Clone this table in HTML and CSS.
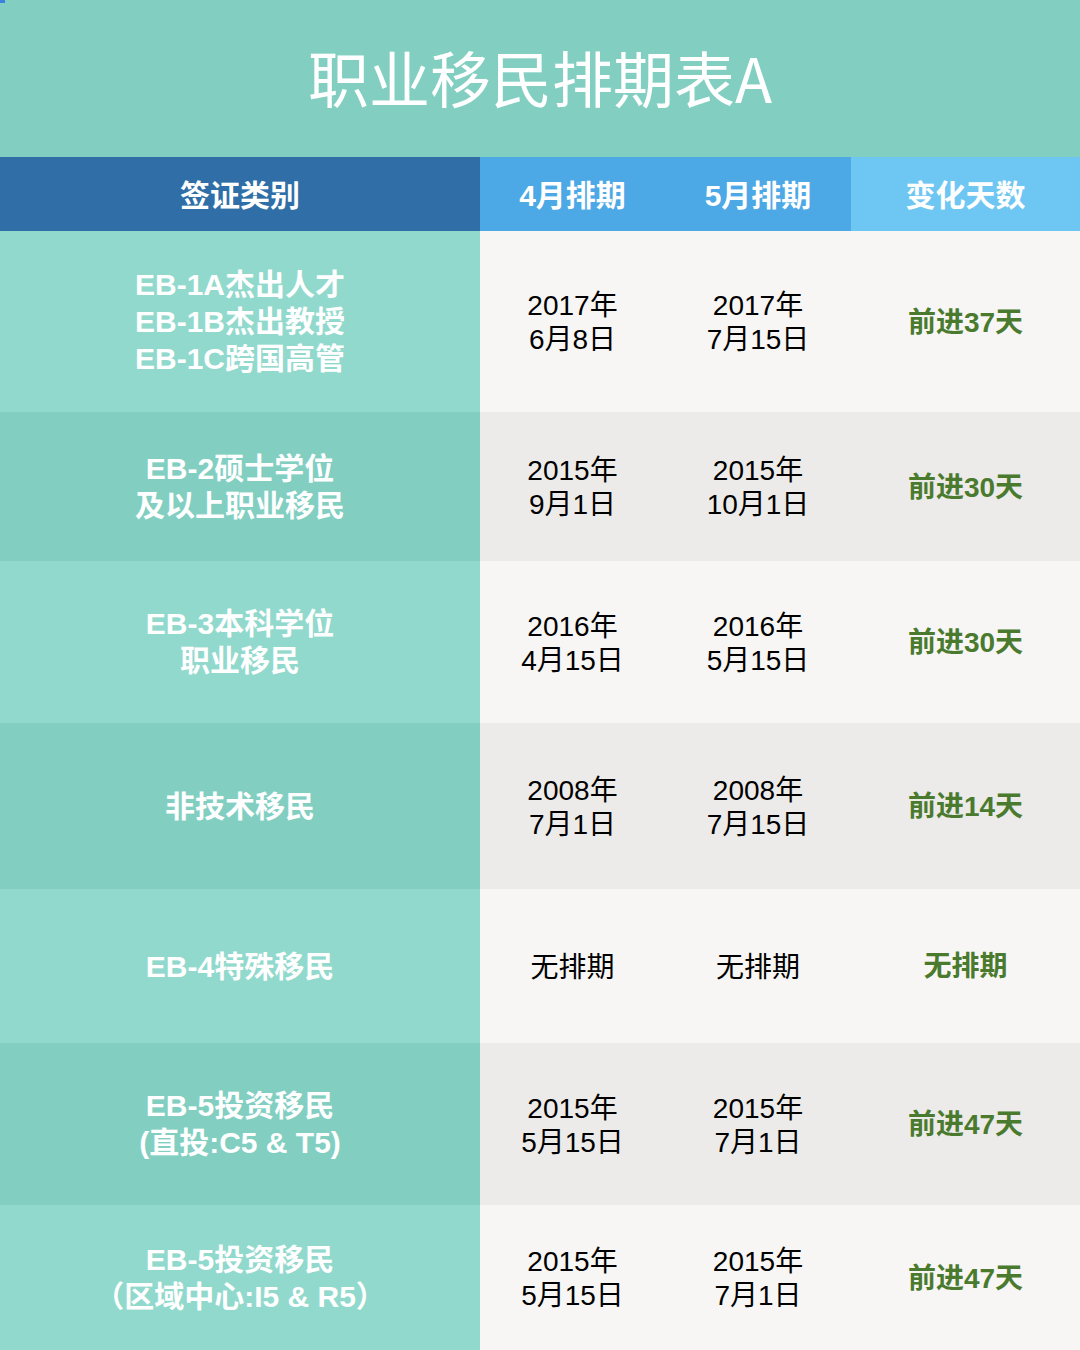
FILE: index.html
```html
<!DOCTYPE html>
<html lang="zh">
<head>
<meta charset="utf-8">
<link rel="stylesheet" href="styles.css">
</head>
<body>
<div class="page">
  <span class="corner"></span>
  <header class="title">职业移民排期表A</header>
  <div class="table">
    <div class="th th-cat">签证类别</div>
    <div class="th th-mid">4月排期</div>
    <div class="th th-mid">5月排期</div>
    <div class="th th-light">变化天数</div>

    <div class="c cat l r1">EB-1A杰出人才<br>EB-1B杰出教授<br>EB-1C跨国高管</div>
    <div class="c d l">2017年<br>6月8日</div>
    <div class="c d l">2017年<br>7月15日</div>
    <div class="c g l">前进37天</div>

    <div class="c cat k">EB-2硕士学位<br>及以上职业移民</div>
    <div class="c d k">2015年<br>9月1日</div>
    <div class="c d k">2015年<br>10月1日</div>
    <div class="c g k">前进30天</div>

    <div class="c cat l">EB-3本科学位<br>职业移民</div>
    <div class="c d l">2016年<br>4月15日</div>
    <div class="c d l">2016年<br>5月15日</div>
    <div class="c g l">前进30天</div>

    <div class="c cat k">非技术移民</div>
    <div class="c d k">2008年<br>7月1日</div>
    <div class="c d k">2008年<br>7月15日</div>
    <div class="c g k">前进14天</div>

    <div class="c cat l">EB-4特殊移民</div>
    <div class="c d l">无排期</div>
    <div class="c d l">无排期</div>
    <div class="c g l">无排期</div>

    <div class="c cat k">EB-5投资移民<br>(直投:C5 &amp; T5)</div>
    <div class="c d k">2015年<br>5月15日</div>
    <div class="c d k">2015年<br>7月1日</div>
    <div class="c g k">前进47天</div>

    <div class="c cat l">EB-5投资移民<br>（区域中心:I5 &amp; R5）</div>
    <div class="c d l">2015年<br>5月15日</div>
    <div class="c d l">2015年<br>7月1日</div>
    <div class="c g l">前进47天</div>
  </div>
</div>
</body>
</html>
```

FILE: styles.css
```css
html, body {
  margin: 0;
  padding: 0;
}
body {
  width: 1080px;
  height: 1350px;
  overflow: hidden;
  background: #f7f6f4;
  font-family: "Liberation Sans", "Noto Sans CJK SC", sans-serif;
}
.page {
  position: relative;
  width: 1080px;
}
.corner {
  position: absolute;
  left: 0;
  top: 0;
  width: 5px;
  height: 3px;
  background: #3f7fe0;
}
.title {
  height: 157px;
  background: #82cfc2;
  color: #fff;
  font-family: "Noto Sans CJK SC", sans-serif;
  font-weight: 400;
  font-size: 61px;
  display: flex;
  align-items: center;
  justify-content: center;
  box-sizing: border-box;
  line-height: 1;
  padding-bottom: 4px;
}
.table {
  display: grid;
  grid-template-columns: 480px 185px 186px 229px;
  grid-template-rows: 74px 181px 149px 162px 166px 154px 162px 145px;
}
.th {
  display: flex;
  align-items: center;
  justify-content: center;
  color: #fff;
  font-weight: 700;
  font-size: 30px;
  padding-bottom: 2px;
}
.th-cat { background: #2f6ea6; }
.th-mid { background: #4da8e6; }
.th-light { background: #6ec6f2; }
.c {
  display: flex;
  align-items: center;
  justify-content: center;
  text-align: center;
}
.cat {
  color: #fff;
  font-weight: 700;
  font-size: 30px;
  line-height: 37px;
}
.cat.l { background: #92d9cd; }
.cat.k { background: #82cfc2; }
.d {
  color: #000;
  font-size: 28px;
  line-height: 34px;
  padding-top: 3px;
}
.g {
  color: #4a7a2e;
  font-weight: 700;
  font-size: 28px;
  padding-bottom: 4px;
}
.d.l, .g.l { background: #f7f6f4; }
.d.k, .g.k { background: #ecebe9; }
```
